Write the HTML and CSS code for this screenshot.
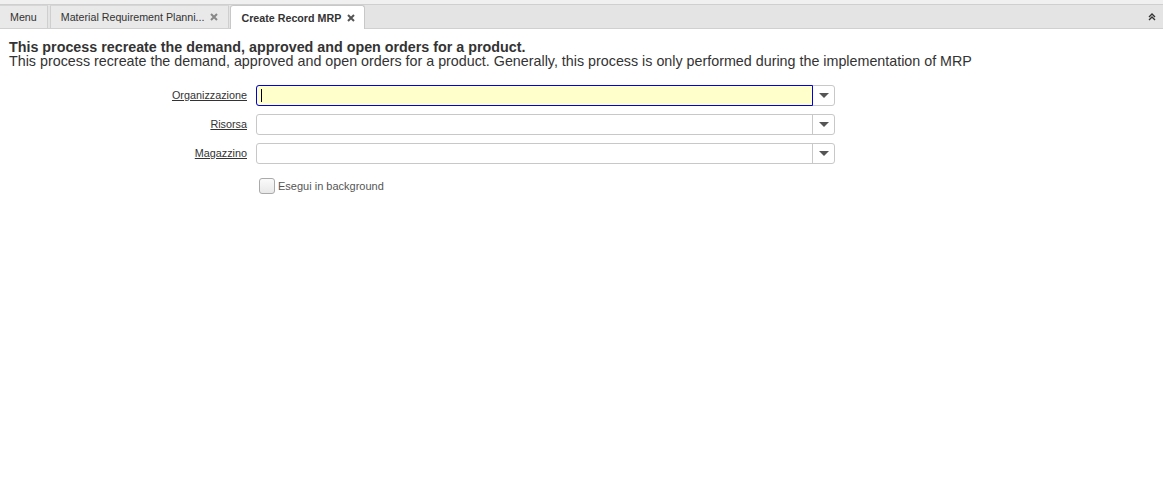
FILE: index.html
```html
<!DOCTYPE html>
<html>
<head>
<meta charset="utf-8">
<link rel="stylesheet" href="styles.css">
</head>
<body>
<div class="topstrip"></div>
<div class="tabbar">
  <div class="tabs">
    <div class="tab">Menu</div>
    <div class="tab">Material Requirement Planni... <svg class="close" width="8" height="8" viewBox="0 0 8 8"><path d="M1 1 L7 7 M7 1 L1 7" stroke="#888" stroke-width="2"/></svg></div>
    <div class="tab active">Create Record MRP <svg class="close" width="8" height="8" viewBox="0 0 8 8"><path d="M1 1 L7 7 M7 1 L1 7" stroke="#555" stroke-width="2"/></svg></div>
  </div>
  <div class="collapse">
    <svg width="8" height="8" viewBox="0 0 8 8"><path d="M1 4 L4 1 L7 4 M1 7 L4 4 L7 7" fill="none" stroke="#333" stroke-width="1.4"/></svg>
  </div>
</div>
<div class="content">
  <div class="title">This process recreate the demand, approved and open orders for a product.</div>
  <div class="desc">This process recreate the demand, approved and open orders for a product. Generally, this process is only performed during the implementation of MRP</div>
  <div class="form">
    <div class="row">
      <label class="lbl">Organizzazione</label>
      <div class="combo focused"><div class="input"><span class="caret"></span></div><div class="btn"><span class="arrow"></span></div></div>
    </div>
    <div class="row">
      <label class="lbl">Risorsa</label>
      <div class="combo"><div class="input"></div><div class="btn"><span class="arrow"></span></div></div>
    </div>
    <div class="row">
      <label class="lbl">Magazzino</label>
      <div class="combo"><div class="input"></div><div class="btn"><span class="arrow"></span></div></div>
    </div>
    <div class="checkrow">
      <div class="spacer"></div>
      <div class="check"><span class="box"></span><span class="ctext">Esegui in background</span></div>
    </div>
  </div>
</div>
</body>
</html>
```
FILE: styles.css
```css
html, body { margin: 0; padding: 0; background: #fff; }
body { font-family: "Liberation Sans", Arial, sans-serif; color: #333; }
.topstrip { height: 4px; background: #f0f0f0; border-bottom: 1px solid #cfcfcf; }
.tabbar { height: 23px; background: #e4e4e4; border-bottom: 1px solid #d0d0d0; display: flex; justify-content: space-between; align-items: flex-end; }
.tabs { display: flex; height: 23px; }
.tab { font-size: 10.7px; color: #333; padding: 0 10px; height: 22px; display: flex; align-items: center; margin-right: 1px; background: #e9e9e9; border-right: 1px solid #cfcfcf; border-left: 1px solid #cfcfcf; border-top: 1px solid #d6d6d6; box-sizing: content-box; white-space: pre; }
.tab:first-child { border-left: none; margin-right: 2px; }
.tab.active { background: #fff; font-weight: bold; border-radius: 3px 3px 0 0; border-color: #c8c8c8; height: 23px; margin-bottom: -1px; padding: 0 9px 0 10px; }
.close { margin-left: 3px; }
.collapse { width: 20px; height: 23px; display: flex; align-items: center; justify-content: center; padding-right: 1px; }
.content { padding: 11px 9px 0 9px; }
.title { font-size: 14.3px; font-weight: bold; line-height: 14px; }
.desc { font-size: 14.3px; line-height: 14px; }
.form { margin-top: 17px; }
.row { display: flex; align-items: center; height: 21px; margin-bottom: 8px; }
.lbl { width: 238px; text-align: right; font-size: 10.8px; text-decoration: underline; color: #333; padding-right: 9px; margin-top: -1px; }
.combo { display: flex; width: 579px; height: 21px; border: 1px solid #c8c8c8; border-radius: 3px; box-sizing: border-box; }
.combo .input { flex: 1; height: 100%; box-sizing: border-box; display: flex; align-items: center; padding-left: 4px; }
.combo.focused .input { background: #ffffcc; border: 1px solid #0000e0; margin: -1px 0 -1px -1px; height: 21px; border-radius: 3px 0 0 3px; padding-left: 4px; }
.caret { width: 1px; height: 13px; background: #000; }
.combo .btn { width: 21px; border-left: 1px solid #c8c8c8; display: flex; align-items: center; justify-content: center; }
.combo.focused .btn { border-left: none; }
.arrow { width: 0; height: 0; border-left: 5px solid transparent; border-right: 5px solid transparent; border-top: 5px solid #555; }
.checkrow { display: flex; height: 16px; margin-top: 14px; }
.spacer { width: 250px; }
.check { display: flex; align-items: center; }
.box { width: 16px; height: 16px; border: 1px solid #aaa; border-radius: 3px; box-sizing: border-box; background: linear-gradient(#fafafa, #e8e8e8); margin-right: 3px; }
.ctext { font-size: 11px; color: #555; }
```
